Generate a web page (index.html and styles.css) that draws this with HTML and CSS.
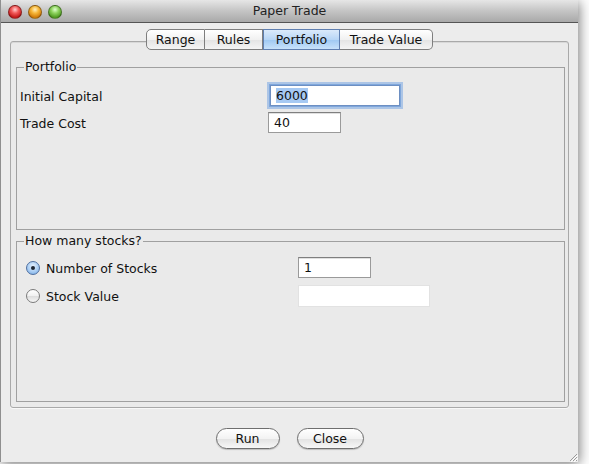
FILE: index.html
```html
<!DOCTYPE html>
<html>
<head>
<meta charset="utf-8">
<link rel="stylesheet" href="styles.css">
</head>
<body>
<div class="window">
  <div class="titlebar">
    <div class="lights">
      <span class="light red"></span>
      <span class="light yellow"></span>
      <span class="light green"></span>
    </div>
    <div class="title">Paper Trade</div>
  </div>
  <div class="content">
    <div class="tabs">
      <span class="tab t-range">Range</span>
      <span class="tab t-rules">Rules</span>
      <span class="tab t-portfolio selected">Portfolio</span>
      <span class="tab t-trade">Trade Value</span>
    </div>
    <div class="pane">
      <fieldset class="group g-portfolio">
        <legend>Portfolio</legend>
        <div class="form">
          <span class="label">Initial Capital</span>
          <div class="field focused f-capital"><span class="sel">6000</span></div>
          <span class="label">Trade Cost</span>
          <div class="field f-cost">40</div>
        </div>
      </fieldset>
      <fieldset class="group g-stocks">
        <legend>How many stocks?</legend>
        <div class="form form-radio">
          <span class="label radio-label"><span class="radio checked"></span>Number of Stocks</span>
          <div class="field f-num">1</div>
          <span class="label radio-label"><span class="radio"></span>Stock Value</span>
          <div class="field disabled f-value"></div>
        </div>
      </fieldset>
    </div>
    <div class="buttons">
      <span class="btn b-run">Run</span>
      <span class="btn b-close">Close</span>
    </div>
    <svg class="grip" width="10" height="10" viewBox="0 0 10 10">
      <path d="M9 2 L2 9 M9 5 L5 9 M9 8 L8 9" stroke="#9a9a9a" stroke-width="1" fill="none"/>
      <path d="M10 3 L3 10 M10 6 L6 10" stroke="#ffffff" stroke-width="1" fill="none"/>
    </svg>
  </div>
</div>
</body>
</html>
```
FILE: styles.css
```css
html, body {
  margin: 0;
  padding: 0;
  background: #ffffff;
}
body {
  width: 589px;
  height: 464px;
  overflow: hidden;
  font-family: "Lucida Grande", "DejaVu Sans", sans-serif;
  font-size: 12.5px;
  color: #111;
}
.window {
  width: 578px;
  height: 462px;
  box-sizing: border-box;
  border-left: 1px solid #8f8f8f;
  background: #ececec;
  box-shadow: 1px 2px 12px rgba(0, 0, 0, 0.55);
  display: flex;
  flex-direction: column;
}
.titlebar {
  height: 22px;
  flex: none;
  background: linear-gradient(#e6e6e6, #c4c4c4 50%, #a9a9a9);
  border-bottom: 1px solid #555;
  display: flex;
  align-items: center;
  position: relative;
}
.lights {
  display: flex;
  gap: 6px;
  padding-left: 7px;
  padding-top: 1px;
}
.light {
  width: 14px;
  height: 14px;
  border-radius: 50%;
  box-sizing: border-box;
  border: 1px solid rgba(0, 0, 0, 0.35);
}
.red { background: radial-gradient(circle at 50% 30%, #ffd0d0 0, #f25b5b 35%, #c21818 75%, #e86060 100%); }
.yellow { background: radial-gradient(circle at 50% 30%, #fff0c0 0, #f7b83a 35%, #d07a08 75%, #f0b050 100%); }
.green { background: radial-gradient(circle at 50% 30%, #e0ffd0 0, #8fd460 35%, #4f9a20 75%, #90d060 100%); }
.title {
  position: absolute;
  left: 0;
  right: 0;
  top: 0;
  line-height: 22px;
  text-align: center;
  font-size: 12.5px;
  color: #222;
}
.content {
  flex: 1;
  display: flex;
  flex-direction: column;
  padding: 6px 9px 0 9px;
  position: relative;
}
.tabs {
  display: flex;
  justify-content: center;
  height: 21px;
  position: relative;
  z-index: 2;
}
.tab {
  box-sizing: border-box;
  height: 21px;
  line-height: 19px;
  text-align: center;
  border: 1px solid #7e7e7e;
  border-left: none;
  background: linear-gradient(#ffffff, #f1f1f1 50%, #e3e3e3 51%, #f4f4f4);
}
.t-range { width: 59px; border-left: 1px solid #7e7e7e; border-radius: 5px 0 0 5px; }
.t-rules { width: 58px; }
.t-portfolio { width: 77px; }
.t-trade { width: 93px; border-radius: 0 5px 5px 0; }
.tab.selected {
  background: linear-gradient(#dbeafb, #b8d6f6 50%, #9ec8f2 51%, #c8e2fb);
  border-color: #5f7fb0;
  border-left: 1px solid #5f7fb0;
}
.pane {
  margin-top: -9px;
  height: 367px;
  box-sizing: border-box;
  border: 1px solid #a9a9a9;
  border-radius: 3px;
  background: #eaeaea;
  box-shadow: inset 0 1px 0 #d8d8d8, 0 1px 0 #f8f8f8;
  padding: 17px 3px 0 5px;
  display: flex;
  flex-direction: column;
  gap: 3px;
}
.group {
  margin: 0;
  border: 1px solid #a0a0a0;
  padding: 0 3px;
  min-width: 0;
}
.group legend {
  padding: 0 1px;
  margin-left: 4px;
  line-height: 16px;
}
.g-portfolio { height: 171px; box-sizing: border-box; }
.g-stocks { height: 169px; box-sizing: border-box; }
.form {
  display: grid;
  grid-template-columns: 248px auto;
  grid-auto-rows: 21px;
  row-gap: 6px;
  align-items: center;
  padding-top: 10px;
  justify-items: start;
}
.form-radio {
  grid-template-columns: 278px auto;
  row-gap: 7px;
  padding-top: 8px;
}
.label {
  display: flex;
  align-items: center;
  padding-top: 1px;
}
.radio-label {
  padding-left: 6px;
  gap: 6px;
}
.radio {
  width: 14px;
  height: 14px;
  box-sizing: border-box;
  border-radius: 50%;
  border: 1px solid #7a7a7a;
  background: linear-gradient(#ffffff, #f0f0f0 50%, #dcdcdc 51%, #f6f6f6);
  display: flex;
  align-items: center;
  justify-content: center;
}
.radio.checked {
  border-color: #4f6f9f;
  background: radial-gradient(circle at 50% 35%, #e7f1fd 0, #a9cdf3 55%, #6fa5e2 100%);
}
.radio.checked::after {
  content: "";
  width: 4px;
  height: 4px;
  border-radius: 50%;
  background: #1d2633;
}
.field {
  box-sizing: border-box;
  height: 21px;
  background: #fff;
  border: 1px solid #9a9a9a;
  border-top-color: #7f7f7f;
  box-shadow: inset 0 1px 0 #e0e0e0;
  padding: 0 5px;
  line-height: 19px;
}
.f-capital { width: 130px; margin-left: 2px; box-shadow: 0 0 0 1px #7fa7dc, 0 0 0 3px rgba(120, 165, 225, 0.55); border-color: #6d8fc2; }
.f-cost { width: 73px; }
.f-num { width: 73px; }
.f-value { width: 132px; height: 22px; border-color: #e2e2e2; box-shadow: none; }
.sel { background: #a6c9f3; }
.buttons {
  display: flex;
  justify-content: center;
  gap: 17px;
  margin-top: 20px;
}
.btn {
  box-sizing: border-box;
  height: 21px;
  line-height: 19px;
  text-align: center;
  border: 1px solid #6e6e6e;
  border-radius: 11px;
  background: linear-gradient(#ffffff, #f3f3f3 50%, #e2e2e2 51%, #f7f7f7);
  box-shadow: 0 1px 1px rgba(0, 0, 0, 0.2);
}
.b-run { width: 64px; }
.b-close { width: 67px; }
.grip {
  position: absolute;
  right: 0;
  bottom: 0;
}
```
